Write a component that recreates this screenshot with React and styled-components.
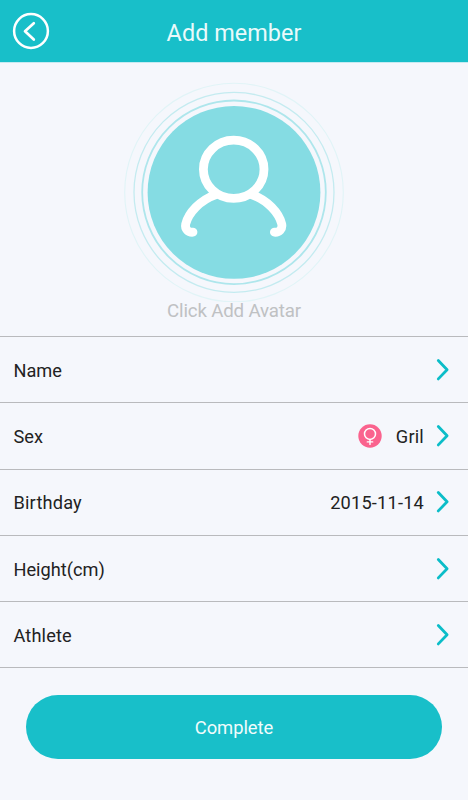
import React from "react";
import styled, { createGlobalStyle } from "styled-components";

const GlobalStyle = createGlobalStyle`
  * { box-sizing: border-box; }
  body { margin: 0; background: #f5f7fc; font-family: Roboto, "Noto Sans", sans-serif; }
`;

const Screen = styled.main`
  width: 468px;
  height: 800px;
  display: flex;
  flex-direction: column;
  background: #f5f7fc;
  overflow: hidden;
`;

const Header = styled.header`
  height: 62px;
  flex: none;
  display: grid;
  grid-template-columns: 62px 1fr 62px;
  align-items: center;
  background: #18bfc9;
  box-shadow: 0 0.6px 0 #a9e2ea;
`;

const BackButton = styled.button`
  width: 62px;
  height: 62px;
  padding: 0;
  border: 0;
  background: none;
  svg { display: block; }
`;

const Title = styled.h1`
  margin: 3px 0 0;
  text-align: center;
  white-space: nowrap;
  color: #e9fafb;
  font-size: 23.4px;
  line-height: 28px;
  font-weight: 400;
  letter-spacing: 0.05px;
`;

const AvatarPicker = styled.section`
  height: 274px;
  flex: none;
  padding-top: 20px;
  display: flex;
  flex-direction: column;
  align-items: center;
  svg { display: block; flex: none; }
`;

const AvatarCaption = styled.div`
  margin-top: -3px;
  font-size: 18.7px;
  line-height: 24px;
  letter-spacing: -0.16px;
  color: #bfc1c3;
`;

const List = styled.div`
  flex: none;
  border-top: 1px solid #b9babd;
`;

const Row = styled.div`
  height: 66.3px;
  padding: 0 18px 0 13.5px;
  display: flex;
  align-items: center;
  border-bottom: 1px solid #b9babd;
  font-size: 18.2px;
  line-height: 24px;
  color: #222;
  svg { display: block; flex: none; }
`;

const Label = styled.span`
  flex: 1;
  padding-top: 2px;
  letter-spacing: ${(p) => p.$spacing || 0}px;
`;

const Value = styled.span`
  padding-top: 2px;
  margin: 0 12px 0 14px;
  letter-spacing: ${(p) => p.$spacing || 0}px;
`;

const CompleteButton = styled.button`
  width: 416px;
  height: 64.6px;
  flex: none;
  align-self: center;
  margin-top: 26.4px;
  padding: 2px 0 0;
  border: 0;
  border-radius: 33px;
  background: #18bfc9;
  color: #f0fcfc;
  font: 400 18.4px/24px Roboto, sans-serif;
  letter-spacing: -0.05px;
`;

const BackIcon = () => (
  <svg width="62" height="62" fill="none" stroke="#fff" strokeLinecap="round" strokeLinejoin="round">
    <circle cx="31" cy="31" r="16.9" strokeWidth="2.5" />
    <path d="M33.8 23.2 25 31.3l8.8 8.3" strokeWidth="2.7" />
  </svg>
);

const AvatarIcon = () => (
  <svg width="220" height="220" viewBox="124 82 220 220" fill="none">
    <circle cx="234" cy="192.5" r="109.3" stroke="#e1f4f7" strokeWidth="1.1" />
    <circle cx="234" cy="192.3" r="100" stroke="#c4ebf0" strokeWidth="1.3" />
    <circle cx="234" cy="192.3" r="91.8" stroke="#aee6ec" strokeWidth="1.8" />
    <circle cx="234" cy="192.4" r="86.4" fill="#85dce3" />
    <g stroke="#fff" strokeWidth="8.8" strokeLinecap="round" strokeLinejoin="round">
      <ellipse cx="233.7" cy="169.3" rx="30.3" ry="29.1" />
      <path d="M216 194.6C200 200 188.5 213 185.7 224C184.6 229.2 188.3 232.6 193 232.2" />
      <path d="M251.5 194.6C267.5 200 279 213 281.7 224C282.8 229.2 279.1 232.6 274.4 232.2" />
    </g>
  </svg>
);

const FemaleIcon = () => (
  <svg width="24" height="24" fill="none" stroke="#fff" strokeLinecap="round">
    <circle cx="12" cy="12" r="11.7" fill="#fa638e" stroke="none" />
    <circle cx="12" cy="9.9" r="5.5" strokeWidth="1.5" />
    <path d="M12 15.4v5M9.3 17.9h5.4" strokeWidth="1.4" />
  </svg>
);

const Chevron = () => (
  <svg width="14" height="24" fill="none" stroke="#0bbdc8" strokeWidth="2.8" strokeLinecap="round" strokeLinejoin="round">
    <path d="M2.3 2.5 11.1 11.7 2.3 20.9" />
  </svg>
);

const fields = [
  { label: "Name" },
  { label: "Sex", value: "Gril", valueSpacing: 0.2, icon: <FemaleIcon /> },
  { label: "Birthday", value: "2015-11-14", spacing: 0.18, valueSpacing: 0.2 },
  { label: "Height(cm)" },
  { label: "Athlete", spacing: 0.14 },
];

export default function App() {
  return (
    <>
      <GlobalStyle />
      <Screen>
        <Header>
          <BackButton aria-label="Back"><BackIcon /></BackButton>
          <Title>Add member</Title>
        </Header>
        <AvatarPicker>
          <AvatarIcon />
          <AvatarCaption>Click Add Avatar</AvatarCaption>
        </AvatarPicker>
        <List>
          {fields.map(({ label, value, icon, spacing, valueSpacing }) => (
            <Row key={label}>
              <Label $spacing={spacing}>{label}</Label>
              {icon}
              {value && <Value $spacing={valueSpacing}>{value}</Value>}
              <Chevron />
            </Row>
          ))}
        </List>
        <CompleteButton>Complete</CompleteButton>
      </Screen>
    </>
  );
}
